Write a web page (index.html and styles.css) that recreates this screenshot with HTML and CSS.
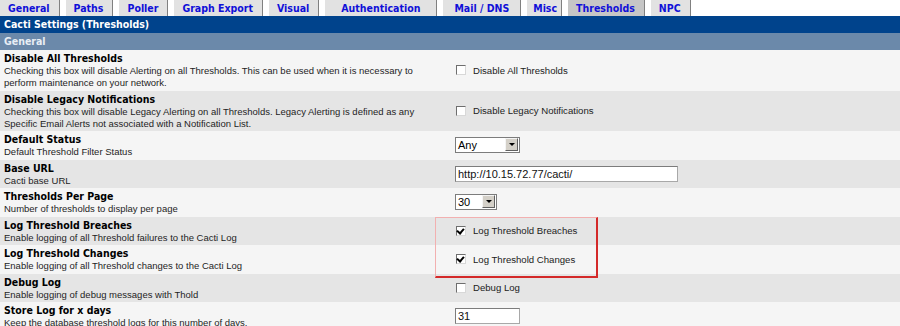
FILE: index.html
```html
<!DOCTYPE html>
<html lang="en">
<head>
  <meta charset="UTF-8">
  <title>Cacti Settings (Thresholds)</title>
  <link rel="stylesheet" href="styles.css">
</head>
<body>
  <!-- abas de configuração -->
  <div class="tabs">
    <a class="tab">General</a>
    <a class="tab">Paths</a>
    <a class="tab">Poller</a>
    <a class="tab">Graph Export</a>
    <a class="tab">Visual</a>
    <a class="tab tab-wide">Authentication</a>
    <a class="tab tab-mail">Mail / DNS</a>
    <a class="tab tab-narrow">Misc</a>
    <a class="tab tab-active">Thresholds</a>
    <a class="tab">NPC</a>
  </div>

  <div class="panel">
    <div class="panel-title">Cacti Settings (Thresholds)</div>
    <div class="section-title">General</div>

    <table class="settings">
      <tr class="row-light">
        <td class="setting-name">
          <div class="label">Disable All Thresholds</div>
          <div class="desc">Checking this box will disable Alerting on all Thresholds. This can be used when it is necessary to perform maintenance on your network.</div>
        </td>
        <td class="setting-value">
          <span class="checkbox"><span class="box"></span>Disable All Thresholds</span>
        </td>
      </tr>
      <tr class="row-dark">
        <td class="setting-name">
          <div class="label">Disable Legacy Notifications</div>
          <div class="desc">Checking this box will disable Legacy Alerting on all Thresholds. Legacy Alerting is defined as any Specific Email Alerts not associated with a Notification List.</div>
        </td>
        <td class="setting-value">
          <span class="checkbox"><span class="box"></span>Disable Legacy Notifications</span>
        </td>
      </tr>
      <tr class="row-light">
        <td class="setting-name">
          <div class="label">Default Status</div>
          <div class="desc">Default Threshold Filter Status</div>
        </td>
        <td class="setting-value">
          <span class="select select-status"><span class="select-text">Any</span><span class="select-btn"></span></span>
        </td>
      </tr>
      <tr class="row-dark">
        <td class="setting-name">
          <div class="label">Base URL</div>
          <div class="desc">Cacti base URL</div>
        </td>
        <td class="setting-value">
          <span class="textbox textbox-url">http://10.15.72.77/cacti/</span>
        </td>
      </tr>
      <tr class="row-light">
        <td class="setting-name">
          <div class="label">Thresholds Per Page</div>
          <div class="desc">Number of thresholds to display per page</div>
        </td>
        <td class="setting-value">
          <span class="select select-page"><span class="select-text">30</span><span class="select-btn"></span></span>
        </td>
      </tr>
      <tr class="row-dark">
        <td class="setting-name">
          <div class="label">Log Threshold Breaches</div>
          <div class="desc">Enable logging of all Threshold failures to the Cacti Log</div>
        </td>
        <td class="setting-value">
          <span class="checkbox"><span class="box checked"></span>Log Threshold Breaches</span>
        </td>
      </tr>
      <tr class="row-light">
        <td class="setting-name">
          <div class="label">Log Threshold Changes</div>
          <div class="desc">Enable logging of all Threshold changes to the Cacti Log</div>
        </td>
        <td class="setting-value">
          <span class="checkbox"><span class="box checked"></span>Log Threshold Changes</span>
        </td>
      </tr>
      <tr class="row-dark">
        <td class="setting-name">
          <div class="label">Debug Log</div>
          <div class="desc">Enable logging of debug messages with Thold</div>
        </td>
        <td class="setting-value">
          <span class="checkbox"><span class="box"></span>Debug Log</span>
        </td>
      </tr>
      <tr class="row-light">
        <td class="setting-name">
          <div class="label">Store Log for x days</div>
          <div class="desc">Keep the database threshold logs for this number of days.</div>
        </td>
        <td class="setting-value">
          <span class="textbox textbox-days">31</span>
        </td>
      </tr>
    </table>
  </div>

  <!-- marcação vermelha sobre as opções de log -->
  <div class="callout"></div>
</body>
</html>
```

FILE: styles.css
```css
body {
  margin: 0;
  background-color: #fff;
  font-family: "Liberation Sans", Arial, sans-serif;
  position: relative;
  overflow: hidden;
}

.tabs {
  display: flex;
  height: 16px;
}

.tab {
  display: block;
  height: 16px;
  line-height: 16px;
  padding: 0 9px 0 8px;
  margin-right: 6px;
  background-color: #e2e2e2;
  border-right: 1px solid #808080;
  color: #1010d8;
  font-family: "DejaVu Sans Condensed", "DejaVu Sans", sans-serif;
  font-weight: bold;
  font-size: 10.5px;
  white-space: nowrap;
}

.tab-wide {
  padding: 0 16px;
}

.tab-mail {
  padding: 0 11px;
}

.tab-narrow {
  padding: 0 4px 0 6px;
}

.tab-active {
  background-color: #c6c6c6;
}

.panel-title {
  height: 17px;
  line-height: 17px;
  padding-left: 4px;
  background-color: #00438c;
  color: #fff;
  font-family: "DejaVu Sans Condensed", "DejaVu Sans", sans-serif;
  font-weight: bold;
  font-size: 10.5px;
}

.section-title {
  height: 17px;
  line-height: 17px;
  padding-left: 4px;
  background-color: #6b89aa;
  color: #e8eef5;
  font-family: "DejaVu Sans Condensed", "DejaVu Sans", sans-serif;
  font-weight: bold;
  font-size: 10.5px;
}

.settings {
  width: 100%;
  border-collapse: collapse;
}

.settings td {
  padding: 0;
}

.row-light {
  background-color: #f5f5f5;
}

.row-dark {
  background-color: #e5e5e5;
}

.setting-name {
  width: 444px;
  padding: 2px 4px 1.5px 4px !important;
  vertical-align: top;
}

.setting-value {
  padding-left: 3px !important;
  vertical-align: middle;
}

.label {
  height: 13px;
  line-height: 13px;
  color: #000;
  font-family: "DejaVu Sans Condensed", "DejaVu Sans", sans-serif;
  font-weight: bold;
  font-size: 10.5px;
}

.desc {
  max-width: 420px;
  line-height: 12px;
  color: #1e1e1e;
  font-size: 9.5px;
}

.checkbox {
  display: inline-flex;
  align-items: center;
  margin-top: 3px;
  color: #222;
  font-size: 9.6px;
}

.box {
  display: inline-block;
  box-sizing: border-box;
  width: 10px;
  height: 10px;
  margin: 0 7px 0 1px;
  background-color: #fff;
  border-top: 1px solid #6e6e6e;
  border-left: 1px solid #6e6e6e;
  border-right: 1px solid #d8d8d8;
  border-bottom: 1px solid #d8d8d8;
  position: relative;
}

.box.checked::after {
  content: "";
  position: absolute;
  left: 1px;
  top: 0px;
  width: 3px;
  height: 5px;
  border-right: 2px solid #000;
  border-bottom: 2px solid #000;
  transform: rotate(40deg);
}

.select {
  display: flex;
  box-sizing: border-box;
  height: 16px;
  border: 1px solid #7c7c7c;
  background-color: #fff;
  font-size: 11px;
}

.select-status {
  width: 65px;
}

.select-page {
  width: 42px;
}

.select-text {
  flex: 1;
  line-height: 14px;
  padding-left: 2px;
}

.select-btn {
  box-sizing: border-box;
  width: 13px;
  height: 13px;
  margin: 0 1px 0 0;
  background-color: #d4d0c8;
  border-top: 1px solid #f4f4f4;
  border-left: 1px solid #f4f4f4;
  border-right: 1px solid #606060;
  border-bottom: 1px solid #606060;
  position: relative;
}

.select-btn::after {
  content: "";
  position: absolute;
  left: 3px;
  top: 4px;
  border-left: 3px solid transparent;
  border-right: 3px solid transparent;
  border-top: 3px solid #000;
}

.textbox {
  display: block;
  box-sizing: border-box;
  height: 16px;
  line-height: 14px;
  padding-left: 2px;
  border: 1px solid #7c7c7c;
  border-right-color: #a8a8a8;
  border-bottom-color: #a8a8a8;
  background-color: #fff;
  color: #111;
  font-size: 11px;
}

.textbox-url {
  width: 223px;
}

.textbox-days {
  width: 65px;
}

.callout {
  position: absolute;
  left: 435px;
  top: 217px;
  width: 160px;
  height: 58px;
  border-top: 1px solid #f2b0b0;
  border-left: 1px solid #f2b0b0;
  border-right: 2px solid #d42a2a;
  border-bottom: 2px solid #d42a2a;
}
```
